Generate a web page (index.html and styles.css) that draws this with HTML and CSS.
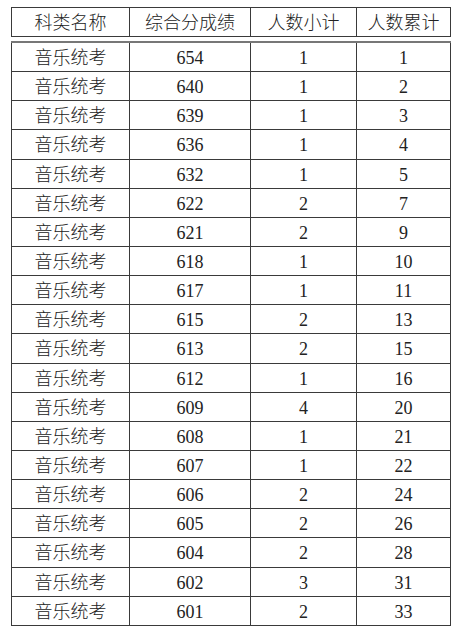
FILE: index.html
```html
<!DOCTYPE html>
<html lang="zh">
<head>
<meta charset="utf-8">
<link rel="stylesheet" href="styles.css">
</head>
<body>
<div class="sheet">
  <table class="grid head">
    <colgroup><col class="c1"><col class="c2"><col class="c3"><col class="c4"></colgroup>
    <tr><th>科类名称</th><th>综合分成绩</th><th>人数小计</th><th>人数累计</th></tr>
  </table>
  <table class="grid data">
    <colgroup><col class="c1"><col class="c2"><col class="c3"><col class="c4"></colgroup>
    <tr><td>音乐统考</td><td>654</td><td>1</td><td>1</td></tr>
    <tr><td>音乐统考</td><td>640</td><td>1</td><td>2</td></tr>
    <tr><td>音乐统考</td><td>639</td><td>1</td><td>3</td></tr>
    <tr><td>音乐统考</td><td>636</td><td>1</td><td>4</td></tr>
    <tr><td>音乐统考</td><td>632</td><td>1</td><td>5</td></tr>
    <tr><td>音乐统考</td><td>622</td><td>2</td><td>7</td></tr>
    <tr><td>音乐统考</td><td>621</td><td>2</td><td>9</td></tr>
    <tr><td>音乐统考</td><td>618</td><td>1</td><td>10</td></tr>
    <tr><td>音乐统考</td><td>617</td><td>1</td><td>11</td></tr>
    <tr><td>音乐统考</td><td>615</td><td>2</td><td>13</td></tr>
    <tr><td>音乐统考</td><td>613</td><td>2</td><td>15</td></tr>
    <tr><td>音乐统考</td><td>612</td><td>1</td><td>16</td></tr>
    <tr><td>音乐统考</td><td>609</td><td>4</td><td>20</td></tr>
    <tr><td>音乐统考</td><td>608</td><td>1</td><td>21</td></tr>
    <tr><td>音乐统考</td><td>607</td><td>1</td><td>22</td></tr>
    <tr><td>音乐统考</td><td>606</td><td>2</td><td>24</td></tr>
    <tr><td>音乐统考</td><td>605</td><td>2</td><td>26</td></tr>
    <tr><td>音乐统考</td><td>604</td><td>2</td><td>28</td></tr>
    <tr><td>音乐统考</td><td>602</td><td>3</td><td>31</td></tr>
    <tr><td>音乐统考</td><td>601</td><td>2</td><td>33</td></tr>
  </table>
</div>
</body>
</html>
```

FILE: styles.css
```css
html, body {
  margin: 0;
  padding: 0;
  background: #ffffff;
}
.sheet {
  padding: 7px 0 0 11px;
  display: flex;
  flex-direction: column;
  gap: 4px;
}
.grid {
  border-collapse: collapse;
  table-layout: fixed;
  width: 439px;
  font-family: "Liberation Serif", "Noto Sans CJK SC", serif;
  font-size: 18px;
  font-weight: 300;
  color: #222;
}
.c1 { width: 118px; }
.c2 { width: 121px; }
.c3 { width: 106px; }
.c4 { width: 94px; }
.grid th, .grid td {
  border: 1px solid #3a3a3a;
  text-align: center;
  vertical-align: middle;
  padding: 2px 0 0;
  font-weight: 300;
  line-height: 20px;
}
.head th {
  height: 26px;
}
.data {
  border-top: 2px solid #777;
}
.data td {
  height: 26.15px;
}
```
